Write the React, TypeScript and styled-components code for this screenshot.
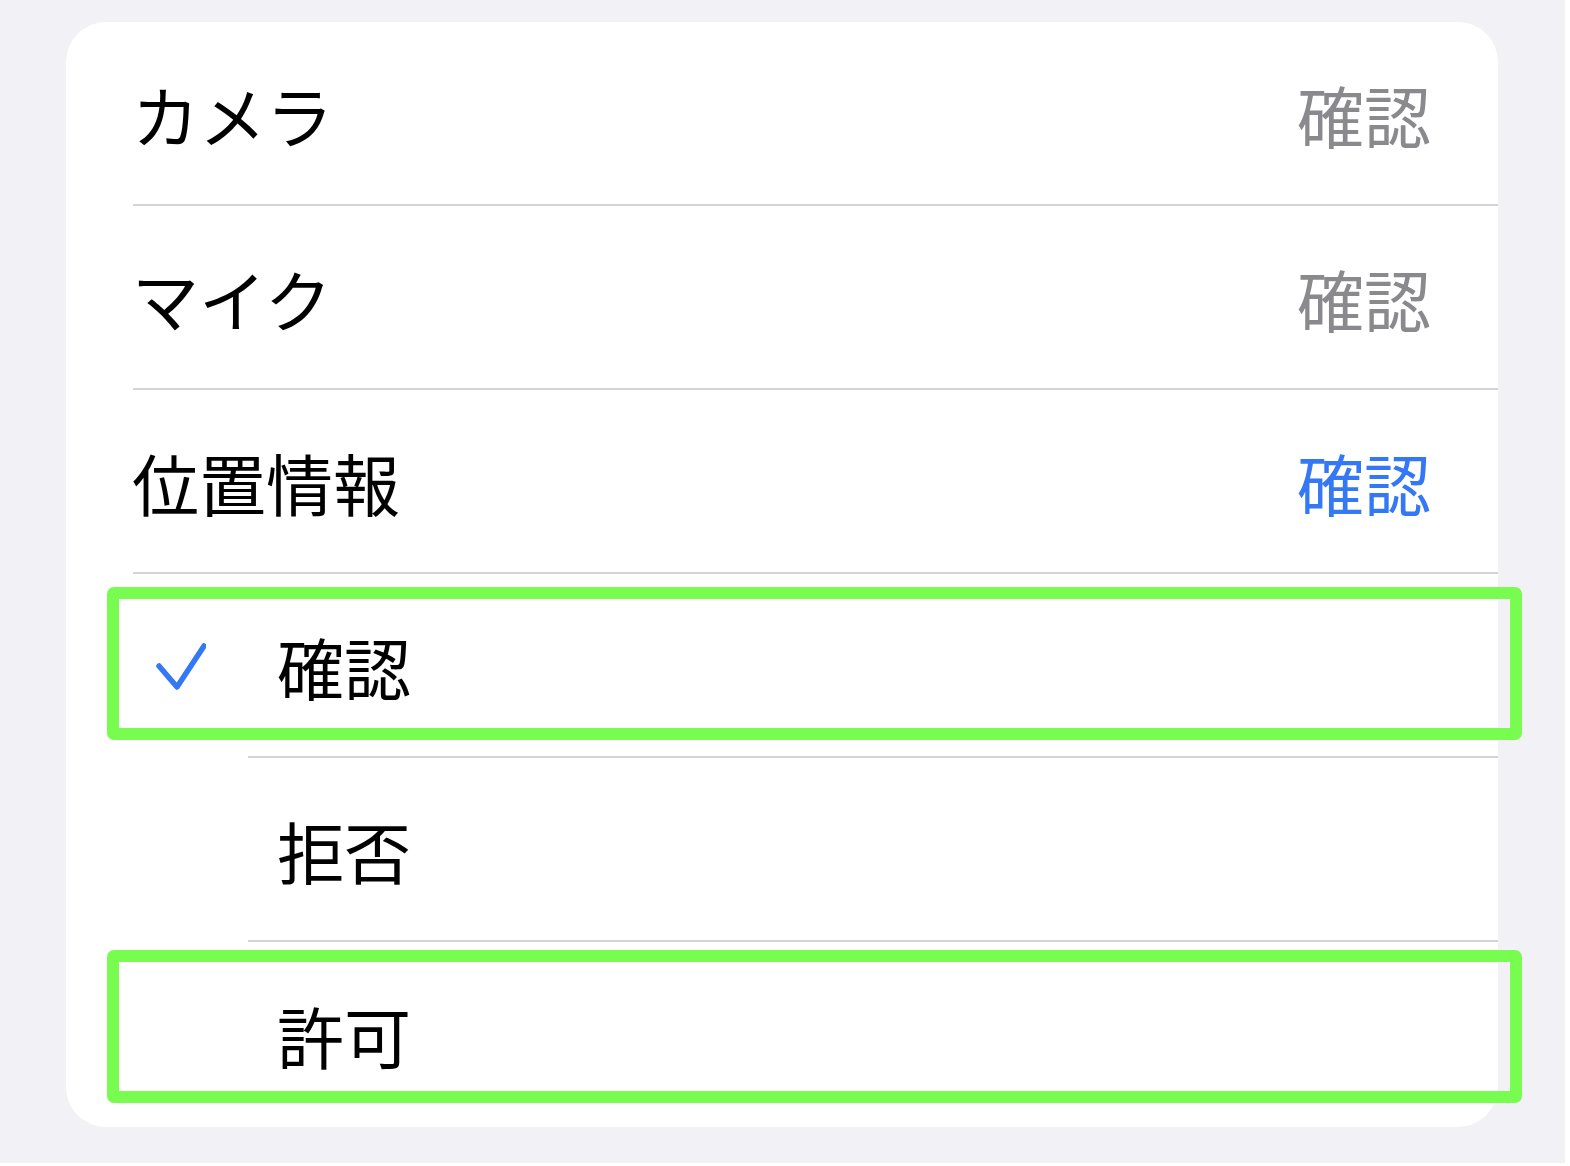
import React from "react";
import styled, { createGlobalStyle } from "styled-components";

const Global = createGlobalStyle`
  html, body { margin: 0; padding: 0; background: #ffffff; }
  body { font-family: "Noto Sans CJK JP", "Noto Sans", sans-serif; }
`;

const Page = styled.div`
  width: 1565px;
  height: 1163px;
  background: #f1f1f6;
  box-sizing: border-box;
  padding: 22px 0 0 66px;
`;

const Card = styled.div`
  width: 1432px;
  height: 1105px;
  background: #ffffff;
  border-radius: 40px;
  display: flex;
  flex-direction: column;
`;

const Row = styled.div<{ $grow?: boolean }>`
  position: relative;
  height: ${(p) => (p.$grow ? "auto" : "182px")};
  flex: ${(p) => (p.$grow ? "1" : "none")};
  display: flex;
  align-items: center;
  padding: 0 67px 0 66px;
  box-sizing: border-box;
`;

const OptionRow = styled(Row)`
  padding-left: 90px;
`;

const Label = styled.span`
  font-size: 67px;
  line-height: 1;
  color: #000000;
  font-weight: 400;
  flex: 1;
`;

const Value = styled.span<{ $active?: boolean }>`
  font-size: 67px;
  line-height: 1;
  font-weight: 400;
  color: ${(p) => (p.$active ? "#3478f6" : "#8a8a8e")};
`;

const CheckCell = styled.div`
  width: 121px;
  height: 50px;
  display: flex;
  align-items: center;
  flex: none;
`;

const Separator = styled.div<{ $inset: number }>`
  height: 2px;
  margin-left: ${(p) => p.$inset}px;
  background: #d4d4d7;
  flex: none;
`;

const Highlight = styled.div<{ $top: number }>`
  position: absolute;
  left: 41px;
  top: ${(p) => p.$top}px;
  width: 1415px;
  height: 153px;
  box-sizing: border-box;
  border: 12px solid #78fc4f;
  border-radius: 7px;
  pointer-events: none;
`;

const Check = () => (
  <svg width="50" height="50" viewBox="0 0 50 50" style={{ marginTop: 4 }}>
    <path
      d="M3 24 L21 45 L48 4"
      fill="none"
      stroke="#3478f6"
      strokeWidth="5.5"
      strokeLinecap="round"
      strokeLinejoin="round"
    />
  </svg>
);

export default function App() {
  return (
    <>
      <Global />
      <Page>
        <Card>
          <Row>
            <Label>カメラ</Label>
            <Value>確認</Value>
          </Row>
          <Separator $inset={67} />
          <Row>
            <Label>マイク</Label>
            <Value>確認</Value>
          </Row>
          <Separator $inset={67} />
          <Row>
            <Label>位置情報</Label>
            <Value $active>確認</Value>
          </Row>
          <Separator $inset={67} />
          <OptionRow>
            <CheckCell>
              <Check />
            </CheckCell>
            <Label>確認</Label>
            <Highlight $top={13} />
          </OptionRow>
          <Separator $inset={182} />
          <OptionRow>
            <CheckCell />
            <Label>拒否</Label>
          </OptionRow>
          <Separator $inset={182} />
          <OptionRow $grow>
            <CheckCell />
            <Label>許可</Label>
            <Highlight $top={8} />
          </OptionRow>
        </Card>
      </Page>
    </>
  );
}
